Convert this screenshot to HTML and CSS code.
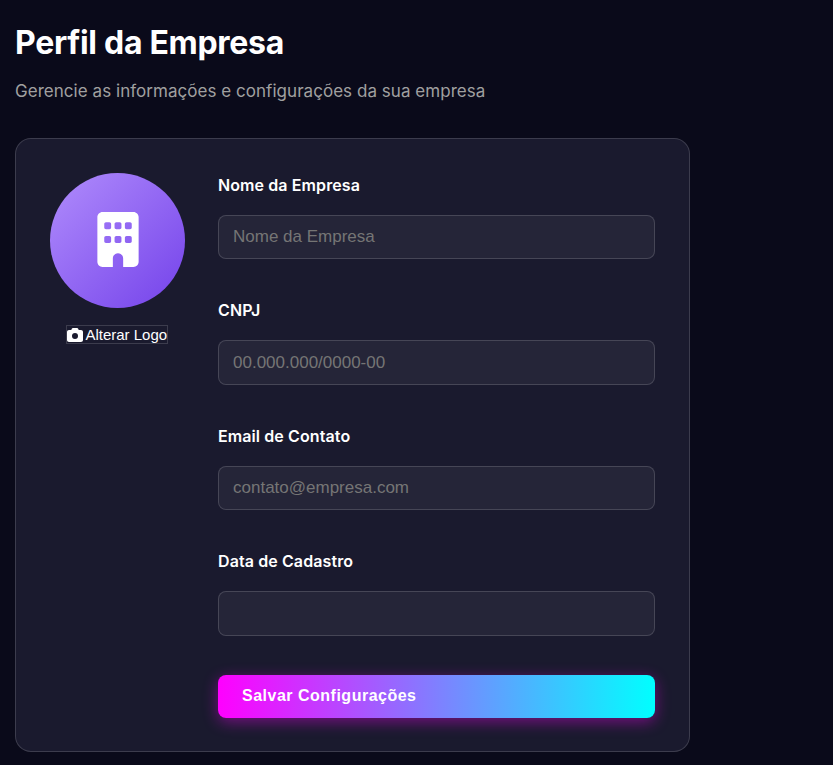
FILE: index.html
```html
<!DOCTYPE html>
<html lang="pt-BR">
<head>
  <meta charset="UTF-8">
  <meta name="viewport" content="width=device-width, initial-scale=1.0">
  <title>Perfil da Empresa</title>
  <link rel="stylesheet" href="styles.css">
</head>
<body>
  <div class="page">
    <h1>Perfil da Empresa</h1>
    <p class="subtitle">Gerencie as informações e configurações da sua empresa</p>

    <div class="card">
      <!-- Logo -->
      <div class="logo-col">
        <div class="logo">
          <svg width="42" height="55" viewBox="0 0 384 512">
            <path fill="#fff" d="M48 0C21.500 0 0 21.500 0 48V464c0 26.500 21.500 48 48 48h96V432c0-26.500 21.500-48 48-48s48 21.500 48 48v80h96c26.500 0 48-21.500 48-48V48c0-26.500-21.500-48-48-48H48zM64 240c0-8.800 7.200-16 16-16h32c8.800 0 16 7.200 16 16v32c0 8.800-7.200 16-16 16H80c-8.800 0-16-7.200-16-16V240zm112-16h32c8.800 0 16 7.200 16 16v32c0 8.800-7.200 16-16 16H176c-8.800 0-16-7.200-16-16V240c0-8.800 7.200-16 16-16zm80 16c0-8.800 7.200-16 16-16h32c8.800 0 16 7.200 16 16v32c0 8.800-7.200 16-16 16H272c-8.800 0-16-7.200-16-16V240zM80 96h32c8.800 0 16 7.200 16 16v32c0 8.800-7.200 16-16 16H80c-8.800 0-16-7.200-16-16V112c0-8.800 7.200-16 16-16zm80 16c0-8.800 7.200-16 16-16h32c8.800 0 16 7.200 16 16v32c0 8.800-7.200 16-16 16H176c-8.800 0-16-7.200-16-16V112zM272 96h32c8.800 0 16 7.200 16 16v32c0 8.800-7.200 16-16 16H272c-8.800 0-16-7.200-16-16V112c0-8.800 7.200-16 16-16z"/>
          </svg>
        </div>
        <button class="logo-btn" type="button">
          <svg width="16" height="16" viewBox="0 0 512 512">
            <path fill="#fff" d="M149.100 64.800L138.700 96H64C28.700 96 0 124.700 0 160V416c0 35.300 28.700 64 64 64H448c35.300 0 64-28.700 64-64V160c0-35.300-28.700-64-64-64H373.300L362.900 64.800C356.400 45.200 338.100 32 317.400 32H194.600c-20.700 0-39 13.200-45.500 32.800zM256 192a96 96 0 1 1 0 192 96 96 0 1 1 0-192z"/>
          </svg>
          Alterar Logo
        </button>
      </div>

      <!-- Form -->
      <form class="form">
        <div class="field">
          <label>Nome da Empresa</label>
          <input type="text" placeholder="Nome da Empresa">
        </div>
        <div class="field">
          <label>CNPJ</label>
          <input type="text" placeholder="00.000.000/0000-00">
        </div>
        <div class="field">
          <label>Email de Contato</label>
          <input type="text" placeholder="contato@empresa.com">
        </div>
        <div class="field">
          <label>Data de Cadastro</label>
          <input type="text">
        </div>
        <button class="save-btn" type="button">Salvar Configurações</button>
      </form>
    </div>
  </div>
</body>
</html>
```

FILE: styles.css
```css
body {
  margin: 0;
  background-color: #0a0a1a;
  font-family: Inter, sans-serif;
  color: #fff;
}
.page {
  width: 675px;
  padding: 24px 15px 13px;
}
h1 {
  margin: 0;
  font-size: 32px;
  line-height: 38px;
  font-weight: 700;
  letter-spacing: -0.3px;
}
.subtitle {
  margin: 17px 0 35px;
  font-size: 17px;
  line-height: 24px;
  letter-spacing: 0.04px;
  color: #a0a0a0;
}
.card {
  display: flex;
  gap: 33px;
  box-sizing: border-box;
  height: 614px;
  padding: 34px;
  background: #1a1a2e;
  border: 1px solid rgba(255, 255, 255, 0.15);
  border-radius: 16px;
}
.logo-col {
  display: flex;
  flex-direction: column;
  align-items: center;
  width: 135px;
  flex-shrink: 0;
}
.logo {
  display: flex;
  align-items: center;
  justify-content: center;
  box-sizing: border-box;
  width: 135px;
  height: 135px;
  padding-bottom: 2px;
  border-radius: 50%;
  background: linear-gradient(135deg, #b08cfc, #7442ea);
}
.logo-btn {
  display: flex;
  align-items: center;
  gap: 2.5px;
  height: 19px;
  margin: 17px 1px 0 0;
  padding: 0;
  background: transparent;
  border: 1px solid rgba(255, 255, 255, 0.15);
  color: #fff;
  font-family: "Liberation Sans", Arial, sans-serif;
  font-size: 15px;
}
.form {
  flex: 1;
}
.field {
  margin-bottom: 39px;
}
label {
  display: block;
  margin-bottom: 17.9px;
  font-size: 16px;
  line-height: 24px;
  font-weight: 600;
  letter-spacing: 0.1px;
}
input {
  display: block;
  box-sizing: border-box;
  width: 100%;
  height: 44.5px;
  padding: 0 14px;
  background: rgba(255, 255, 255, 0.05);
  border: 1px solid rgba(255, 255, 255, 0.15);
  border-radius: 8px;
  color: #fff;
  font-family: "Liberation Sans", Arial, sans-serif;
  font-size: 17px;
}
input::placeholder {
  color: #757575;
}
.save-btn {
  display: block;
  width: 100%;
  height: 43px;
  padding: 0 24px;
  border: 0;
  border-radius: 8px;
  background: linear-gradient(90deg, #ff00ff, #00ffff);
  box-shadow: 0 4px 15px rgba(255, 0, 255, 0.4);
  color: #fff;
  font-family: "Liberation Sans", Arial, sans-serif;
  font-size: 16px;
  font-weight: 700;
  letter-spacing: 0.5px;
  text-align: left;
}
```
